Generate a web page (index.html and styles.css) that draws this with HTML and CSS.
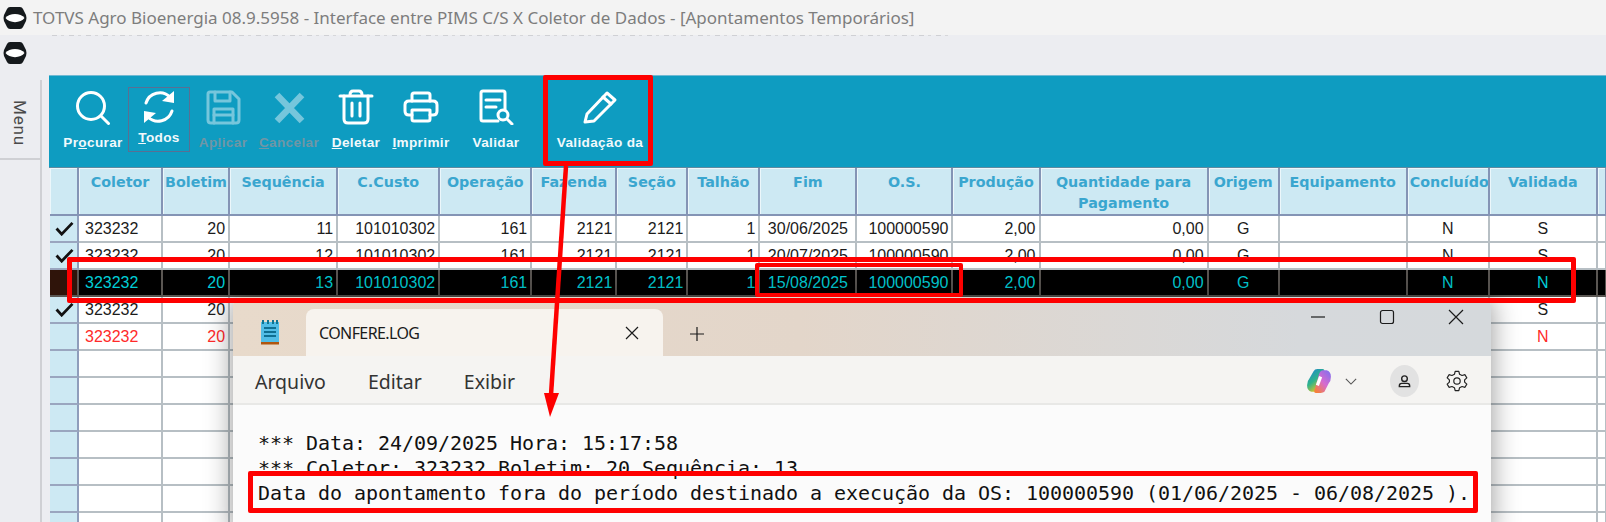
FILE: index.html
```html
<!DOCTYPE html>
<html lang="pt-BR">
<head>
<meta charset="utf-8">
<title>TOTVS Agro Bioenergia</title>
<link rel="stylesheet" href="styles.css">
</head>
<body>
<div class="app">
  <header class="titlebar">
    <svg class="logo" viewBox="0 0 24 24"><path d="M7 1H17Q19 1 20 3L23 9Q24 12 23 15L20 21Q19 23 17 23H7Q5 23 4 21L1 15Q0 12 1 9L4 3Q5 1 7 1Z" fill="#15191c"/><path d="M2.500 12C6 6.500 18 6.500 21.500 12C18 17.500 6 17.500 2.500 12Z" fill="#fff"/></svg>
    <span class="title-text">TOTVS Agro Bioenergia 08.9.5958 - Interface entre PIMS C/S X Coletor de Dados - [Apontamentos Temporários]</span>
  </header>
  <div class="band">
    <div class="ghost"></div>
    <svg class="logo" viewBox="0 0 24 24"><path d="M7 1H17Q19 1 20 3L23 9Q24 12 23 15L20 21Q19 23 17 23H7Q5 23 4 21L1 15Q0 12 1 9L4 3Q5 1 7 1Z" fill="#15191c"/><path d="M2.500 12C6 6.500 18 6.500 21.500 12C18 17.500 6 17.500 2.500 12Z" fill="#fff"/></svg>
  </div>
  <div class="workspace">
    <aside class="rail">
      <div class="rail-tab"><span class="rail-text">Menu</span></div>
    </aside>
    <main class="main">
      <nav class="toolbar">
        <button class="tool w-procurar">
          <svg viewBox="0 0 36 36"><circle cx="16" cy="17" r="13.500"/><path d="M26 27L33.500 34.500"/></svg>
          <span>Pr<u>o</u>curar</span>
        </button>
        <button class="tool w-todos active">
          <svg viewBox="0 0 36 36"><path d="M5 14A14.500 14.500 0 0 1 29 8"/><path d="M31 22A14.500 14.500 0 0 1 7 28"/><path class="fill" d="M33 2L33 14L21 12Z"/><path class="fill" d="M3 34L3 22L15 24Z"/></svg>
          <span><u>T</u>odos</span>
        </button>
        <button class="tool w-btn is-off">
          <svg viewBox="0 0 36 36"><path d="M3 5Q3 3 5 3H27L34 10V31Q34 34 31 34H6Q3 34 3 31Z"/><path d="M10 3V12H25V3"/><path d="M9 34V20H28V34"/><path d="M9 26H28"/></svg>
          <span>Ap<u>l</u>icar</span>
        </button>
        <button class="tool w-btn is-off">
          <svg class="thick" viewBox="0 0 36 36"><path d="M6 6L31 32M31 6L6 32"/></svg>
          <span><u>C</u>ancelar</span>
        </button>
        <button class="tool w-deletar">
          <svg viewBox="0 0 36 36"><path d="M2 7H34"/><path d="M12 6Q12 2 15 2H21Q24 2 24 6"/><path d="M6 7V30Q6 34 10 34H26Q30 34 30 30V7"/><path d="M14 14V27M22 14V27"/></svg>
          <span><u>D</u>eletar</span>
        </button>
        <button class="tool w-imprimir">
          <svg viewBox="0 0 36 36"><path d="M9 12V6Q9 4 11 4H25Q27 4 27 6V12"/><path d="M9 26H6Q2 26 2 22V16Q2 12 6 12H30Q34 12 34 16V22Q34 26 30 26H27"/><path d="M9 21H27V30Q27 32 25 32H11Q9 32 9 30Z"/></svg>
          <span><u>I</u>mprimir</span>
        </button>
        <button class="tool w-validar">
          <svg viewBox="0 0 36 36"><path d="M27 21V4Q27 2 25 2H5Q3 2 3 4V30Q3 32 5 32H20"/><path d="M8 11H22M8 18H18"/><circle cx="25" cy="26" r="5"/><path d="M29 30L34 35"/></svg>
          <span>Validar</span>
        </button>
        <button class="tool w-validacao">
          <svg viewBox="0 0 36 36"><path d="M5 25L25 4L33 11L12 32L3 33Z"/><path d="M21 8L29 15"/></svg>
          <span>Validação da</span>
        </button>
      </nav>
      <table class="grid">
        <colgroup>
          <col class="c-ind"><col class="c-col"><col class="c-bol"><col class="c-seq"><col class="c-cus"><col class="c-ope"><col class="c-faz"><col class="c-sec"><col class="c-tal"><col class="c-fim"><col class="c-os"><col class="c-pro"><col class="c-qtd"><col class="c-ori"><col class="c-equ"><col class="c-con"><col class="c-val"><col class="c-end">
        </colgroup>
        <thead>
          <tr><th></th><th>Coletor</th><th>Boletim</th><th>Sequência</th><th>C.Custo</th><th>Operação</th><th>Fazenda</th><th>Seção</th><th>Talhão</th><th>Fim</th><th>O.S.</th><th>Produção</th><th>Quantidade para Pagamento</th><th>Origem</th><th>Equipamento</th><th>Concluído</th><th>Validada</th><th></th></tr>
        </thead>
        <tbody>
          <tr><td class="ind"><svg class="check" viewBox="0 0 20 16"><path d="M1.500 8L7 14L18.500 2"/></svg></td><td class="l">323232</td><td>20</td><td>11</td><td>101010302</td><td>161</td><td>2121</td><td>2121</td><td>1</td><td class="m">30/06/2025</td><td>100000590</td><td>2,00</td><td>0,00</td><td class="m">G</td><td></td><td class="m">N</td><td class="m">S</td><td></td></tr>
          <tr><td class="ind"><svg class="check" viewBox="0 0 20 16"><path d="M1.500 8L7 14L18.500 2"/></svg></td><td class="l">323232</td><td>20</td><td>12</td><td>101010302</td><td>161</td><td>2121</td><td>2121</td><td>1</td><td class="m">20/07/2025</td><td>100000590</td><td>2,00</td><td>0,00</td><td class="m">G</td><td></td><td class="m">N</td><td class="m">S</td><td></td></tr>
          <tr class="selected"><td class="ind"></td><td class="l">323232</td><td>20</td><td>13</td><td>101010302</td><td>161</td><td>2121</td><td>2121</td><td>1</td><td class="m">15/08/2025</td><td>100000590</td><td>2,00</td><td>0,00</td><td class="m">G</td><td></td><td class="m">N</td><td class="m">N</td><td></td></tr>
          <tr><td class="ind"><svg class="check" viewBox="0 0 20 16"><path d="M1.500 8L7 14L18.500 2"/></svg></td><td class="l">323232</td><td>20</td><td></td><td></td><td></td><td></td><td></td><td></td><td></td><td></td><td></td><td></td><td></td><td></td><td></td><td class="m">S</td><td></td></tr>
          <tr class="error"><td class="ind"></td><td class="l">323232</td><td>20</td><td></td><td></td><td></td><td></td><td></td><td></td><td></td><td></td><td></td><td></td><td></td><td></td><td></td><td class="m">N</td><td></td></tr>
          <tr><td class="ind"></td><td></td><td></td><td></td><td></td><td></td><td></td><td></td><td></td><td></td><td></td><td></td><td></td><td></td><td></td><td></td><td></td><td></td></tr>
          <tr><td class="ind"></td><td></td><td></td><td></td><td></td><td></td><td></td><td></td><td></td><td></td><td></td><td></td><td></td><td></td><td></td><td></td><td></td><td></td></tr>
          <tr><td class="ind"></td><td></td><td></td><td></td><td></td><td></td><td></td><td></td><td></td><td></td><td></td><td></td><td></td><td></td><td></td><td></td><td></td><td></td></tr>
          <tr><td class="ind"></td><td></td><td></td><td></td><td></td><td></td><td></td><td></td><td></td><td></td><td></td><td></td><td></td><td></td><td></td><td></td><td></td><td></td></tr>
          <tr><td class="ind"></td><td></td><td></td><td></td><td></td><td></td><td></td><td></td><td></td><td></td><td></td><td></td><td></td><td></td><td></td><td></td><td></td><td></td></tr>
          <tr><td class="ind"></td><td></td><td></td><td></td><td></td><td></td><td></td><td></td><td></td><td></td><td></td><td></td><td></td><td></td><td></td><td></td><td></td><td></td></tr>
          <tr><td class="ind"></td><td></td><td></td><td></td><td></td><td></td><td></td><td></td><td></td><td></td><td></td><td></td><td></td><td></td><td></td><td></td><td></td><td></td></tr>
        </tbody>
      </table>
    </main>
  </div>

  <section class="notepad">
    <div class="np-tabs">
      <svg class="np-icon" viewBox="0 0 20 26">
        <rect x="1" y="3" width="18" height="20" fill="#52bde6"/>
        <rect x="2" y="1" width="2" height="4" fill="#0f7391"/><rect x="7" y="1" width="2" height="4" fill="#0f7391"/><rect x="12" y="1" width="2" height="4" fill="#0f7391"/><rect x="16" y="1" width="2" height="4" fill="#0f7391"/>
        <rect x="4" y="8" width="12" height="2" fill="#0f6f92"/><rect x="4" y="12" width="12" height="2" fill="#0f6f92"/><rect x="4" y="16" width="12" height="2" fill="#0f6f92"/>
        <rect x="1" y="23" width="18" height="2.500" fill="#b0560f"/>
      </svg>
      <div class="np-tab">
        <span class="np-tab-name">CONFERE.LOG</span>
        <svg class="np-glyph" viewBox="0 0 14 14"><path d="M1 1L13 13M13 1L1 13"/></svg>
      </div>
      <svg class="np-glyph np-plus" viewBox="0 0 14 14"><path d="M7 0V14M0 7H14"/></svg>
      <div class="np-window-btns">
        <svg class="np-glyph" viewBox="0 0 14 14"><path d="M0 7H14"/></svg>
        <svg class="np-glyph" viewBox="0 0 14 14"><rect x="0.500" y="0.500" width="13" height="13" rx="2"/></svg>
        <svg class="np-glyph" viewBox="0 0 14 14"><path d="M0 0L14 14M14 0L0 14"/></svg>
      </div>
    </div>
    <div class="np-menu">
      <span class="np-item">Arquivo</span>
      <span class="np-item">Editar</span>
      <span class="np-item">Exibir</span>
      <div class="np-actions">
        <svg class="np-copilot" viewBox="0 0 24 24">
          <defs>
            <linearGradient id="cpa" x1="0" y1="0" x2="0.6" y2="1"><stop offset="0" stop-color="#1b7fd8"/><stop offset="0.55" stop-color="#2fb48a"/><stop offset="1" stop-color="#f5c518"/></linearGradient>
            <linearGradient id="cpb" x1="1" y1="0" x2="0.2" y2="1"><stop offset="0" stop-color="#7a6ff0"/><stop offset="0.55" stop-color="#d66bd0"/><stop offset="1" stop-color="#f5803a"/></linearGradient>
          </defs>
          <path d="M7 3Q8 1 10.500 1H15.500Q17 1 17 2.500L12 18Q11 22 8 22H5Q1 21 1 16Q1 12 3 10Z" fill="url(#cpa)"/>
          <path d="M17 22Q16 23 13.500 23H9Q7.500 23 7.500 21.500L12 6Q13 2 16 2H19Q23 3 23 8Q23 12 21 14Z" fill="url(#cpb)"/>
          <path d="M13.500 8L10.500 16" stroke="#fff" stroke-width="3"/>
        </svg>
        <svg class="np-chevron" viewBox="0 0 14 8"><path d="M1 1L7 7L13 1"/></svg>
        <div class="np-avatar">
          <svg viewBox="0 0 16 16"><circle cx="8" cy="5" r="3"/><path d="M2.500 13.500V12.500Q2.500 10 5 10H11Q13.500 10 13.500 12.500V13.500Z"/></svg>
        </div>
        <svg class="np-gear" viewBox="0 0 24 24"><circle cx="12" cy="12" r="3.500"/><path d="M10 1.500H14L14.800 4.700L17.500 6L20.700 5.100L22.700 8.600L20.300 10.800V13.200L22.700 15.400L20.700 18.900L17.500 18L14.800 19.300L14 22.500H10L9.200 19.300L6.500 18L3.300 18.900L1.300 15.400L3.700 13.200V10.800L1.300 8.600L3.300 5.100L6.500 6L9.200 4.700Z"/></svg>
      </div>
    </div>
    <div class="np-body">*** Data: 24/09/2025 Hora: 15:17:58
*** Coletor: 323232 Boletim: 20 Sequência: 13
Data do apontamento fora do período destinado a execução da OS: 100000590 (01/06/2025 - 06/08/2025 ).</div>
  </section>

  <div class="mark mark-tool"></div>
  <div class="mark mark-row"></div>
  <div class="mark mark-cells"></div>
  <div class="mark mark-log"></div>
  <svg class="arrow" viewBox="0 0 40 260"><path class="arrow-line" d="M26 1L11 230"/><path class="arrow-head" d="M4 228L19 228L10 252Z"/></svg>
</div>
</body>
</html>
```
FILE: styles.css
```css
* { box-sizing: border-box; }
html, body { margin: 0; padding: 0; }
body { width: 1606px; height: 522px; overflow: hidden; background: #ecedf1; font-family: "Liberation Sans", Arial, sans-serif; }
.app { position: relative; width: 1606px; height: 522px; overflow: hidden; display: flex; flex-direction: column; }

.titlebar { height: 35px; flex: none; background: #f3f3f3; display: flex; align-items: center; padding-left: 3px; gap: 6px; }
.logo { width: 24px; height: 24px; flex: none; }
.title-text { font-family: "Noto Sans", sans-serif; font-size: 17px; color: #7d7d7d; white-space: nowrap; }

.band { height: 40px; flex: none; background: #ecedf1; padding: 6px 0 0 3px; position: relative; }
.ghost { position: absolute; left: 52px; top: 0; width: 900px; height: 1px; background: repeating-linear-gradient(90deg, #cfd0d4 0 5px, #ecedf1 5px 9px, #d6d7da 9px 12px, #ecedf1 12px 17px); }

.workspace { flex: 1; display: flex; min-height: 0; }
.rail { width: 49px; flex: none; padding-top: 5px; }
.rail-tab { width: 42px; height: 80px; border-right: 2px solid #cfd0d4; border-bottom: 2px solid #cfd0d4; display: flex; justify-content: center; padding-top: 20px; position: relative; }
.rail-tab::after { content: ""; position: absolute; right: -2px; top: 80px; width: 2px; height: 400px; background: #cfd0d4; }
.rail-text { writing-mode: vertical-rl; font-family: Roboto, sans-serif; font-size: 17px; letter-spacing: 0.8px; color: #4a4a4a; height: 50px; }

.main { flex: 1; min-width: 0; }
.toolbar { height: 93px; background: #0e9cc1; border-bottom: 1px solid #5f8aa0; display: flex; padding: 12px 0 0 12px; box-shadow: inset 0 1px 0 #6fb9d3; }
.tool { height: 65px; padding: 2px 0 0; background: none; border: 0; display: flex; flex-direction: column; align-items: center; color: #f1f9fc; font: bold 13.600px "Liberation Sans", sans-serif; letter-spacing: 0.35px; white-space: nowrap; }
.tool svg { width: 36px; height: 36px; fill: none; stroke: #fff; stroke-width: 3; stroke-linecap: round; stroke-linejoin: round; flex: none; }
.tool .fill { fill: #fff; stroke: none; }
.tool span { margin-top: 9px; line-height: 18px; }
.tool.active { border: 1px solid #5a6f93; padding-top: 1px; }
.tool.active span { margin-top: 4px; }
.tool.is-off { color: #6f96a6; }
.tool.is-off svg { stroke: #76c6dc; }
.tool svg.thick { stroke-width: 6.500; stroke-linecap: butt; }
.w-procurar { width: 64px; margin-right: 3px; }
.w-todos { width: 62px; }
.w-btn { width: 66px; }
.w-deletar { width: 68px; }
.w-imprimir { width: 62px; }
.w-validar { width: 88px; }
.w-validacao { width: 120px; }

.grid { border-collapse: separate; border-spacing: 0; table-layout: fixed; width: 1557px; margin-left: 1px; font-size: 16px; color: #1b1b1b; }
.c-ind { width: 29px; } .c-col { width: 84px; } .c-bol { width: 67px; } .c-seq { width: 108px; } .c-cus { width: 102px; } .c-ope { width: 92px; }
.c-faz { width: 85px; } .c-sec { width: 71px; } .c-tal { width: 72px; } .c-fim { width: 97px; } .c-os { width: 96px; } .c-pro { width: 87px; }
.c-qtd { width: 168px; } .c-ori { width: 71px; } .c-equ { width: 128px; } .c-con { width: 82px; } .c-val { width: 108px; } .c-end { width: 9px; }

.grid th { height: 46px; padding: 4px 2px 0; vertical-align: top; background: #cde9f3; color: #3aa6cf; font: bold 14.300px/21px "DejaVu Sans", sans-serif; overflow: hidden; white-space: normal; border-right: 2px solid #8494b5; border-bottom: 2px solid #8494b5; box-shadow: inset 1px 1px 0 #ecf7fb; }
.grid td { height: 27px; padding: 1px 3px 0 5px; text-align: right; white-space: nowrap; overflow: hidden; background: #fff; border-right: 2px solid #b7bfc4; border-bottom: 2px solid #b7bfc4; }
.grid td.l { text-align: left; padding-left: 6px; }
.grid td.m { text-align: center; padding: 1px 0 0; }
.grid td.ind { background: #cde9f3; padding: 0 0 0 5px; text-align: left; border-right-color: #8f9dbb; border-bottom-color: #9aa6bf; }
.check { display: block; width: 19px; height: 15px; fill: none; stroke: #111; stroke-width: 3; }
.selected td { background: #000; color: #00cdd6; border-color: #5a5652; }
.selected td.ind { background: #2f140a; border-color: #5a5652; }
.error td { color: #ff2a2a; }

.notepad { position: absolute; left: 233px; top: 297px; width: 1258px; height: 240px; display: flex; flex-direction: column; background: #fbfbfb; border-radius: 8px 8px 0 0; box-shadow: 0 0 28px rgba(0,0,0,.42); }
.np-tabs { height: 59px; flex: none; display: flex; align-items: flex-end; padding-left: 27px; background: linear-gradient(90deg, #e8dacb 0%, #e3d6ca 45%, #d6d9dc 85%, #d5d9dc 100%); border-radius: 8px 8px 0 0; position: relative; }
.np-icon { width: 20px; height: 26px; align-self: flex-end; margin: 0 27px 11px 0; flex: none; }
.np-tab { width: 357px; height: 47px; flex: none; background: #f7f3ee; border-radius: 8px 8px 0 0; display: flex; align-items: center; justify-content: space-between; padding: 0 24px 0 13px; margin-left: -1px; }
.np-tab-name { font-family: "Noto Sans", sans-serif; font-size: 16px; letter-spacing: -0.6px; color: #1b1b1b; }
.np-glyph { width: 14px; height: 14px; fill: none; stroke: #1b1b1b; stroke-width: 1.200; overflow: visible; flex: none; }
.np-plus { align-self: flex-end; margin: 0 0 15px 27px; }
.np-window-btns { position: absolute; right: 28px; top: 13px; display: flex; gap: 55px; }
.np-menu { height: 49px; flex: none; display: flex; align-items: center; padding: 3px 0 0 22px; background: #f5f4f2; border-bottom: 2px solid #e8e8e6; font-family: "Noto Sans", sans-serif; font-size: 19.500px; color: #333; }
.np-item { margin-right: 42px; }
.np-actions { margin-left: auto; display: flex; align-items: center; margin-right: 23px; }
.np-copilot { width: 26px; height: 26px; flex: none; }
.np-chevron { width: 12px; height: 7px; margin: 0 33px 0 13px; fill: none; stroke: #555; stroke-width: 1.300; flex: none; }
.np-avatar { width: 29px; height: 32px; border-radius: 50%; background: #e2e2e2; display: flex; align-items: center; justify-content: center; margin-right: 27px; }
.np-avatar svg { width: 15px; height: 15px; fill: none; stroke: #222; stroke-width: 1.500; }
.np-gear { width: 22px; height: 24px; fill: none; stroke: #222; stroke-width: 1.300; stroke-linejoin: round; flex: none; }
.np-body { flex: 1; padding: 26px 0 0 25px; font-family: "DejaVu Sans Mono", monospace; font-size: 20px; line-height: 25px; letter-spacing: -0.04px; color: #111; white-space: pre; }

.mark { position: absolute; border: 5px solid #fe0000; border-radius: 2px; pointer-events: none; }
.mark-tool { left: 543px; top: 75px; width: 110px; height: 91px; }
.mark-row { left: 67px; top: 257px; width: 1509px; height: 46px; }
.mark-cells { left: 755px; top: 263px; width: 208px; height: 34px; border-width: 4px; }
.mark-log { left: 248px; top: 471px; width: 1230px; height: 42px; }
.arrow { position: absolute; left: 540px; top: 165px; width: 40px; height: 260px; overflow: visible; }
.arrow-line { fill: none; stroke: #fe0000; stroke-width: 4.500; }
.arrow-head { fill: #fe0000; }
```
